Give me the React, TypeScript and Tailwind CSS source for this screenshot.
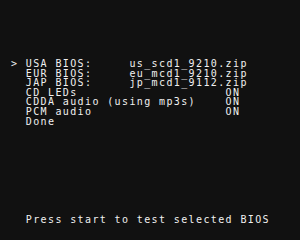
const rows = [
  '> USA BIOS:     us_scd1_9210.zip',
  '  EUR BIOS:     eu_mcd1_9210.zip',
  '  JAP BIOS:     jp_mcd1_9112.zip',
  '  CD LEDs                    ON',
  '  CDDA audio (using mp3s)    ON',
  '  PCM audio                  ON',
  '  Done',
];

export default function App() {
  return (
    <div className="flex h-[240px] w-[300px] flex-col bg-[#111111] pb-[15px] pl-[11px] pt-[59px] font-['DejaVu_Sans_Mono',monospace] text-[10px] leading-[9.6px] tracking-[1.38px] text-[#f0f0f0]">
      <div className="flex flex-col">
        {rows.map((row) => (
          <div key={row} className="whitespace-pre">
            {row}
          </div>
        ))}
      </div>
      <div className="mt-auto whitespace-pre">{'  Press start to test selected BIOS'}</div>
    </div>
  );
}
